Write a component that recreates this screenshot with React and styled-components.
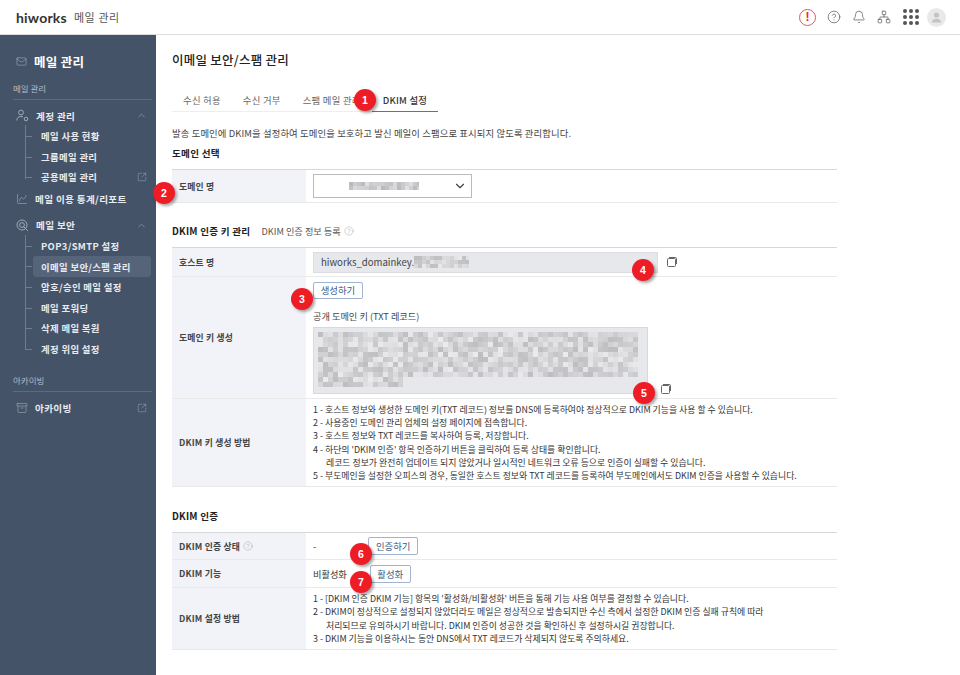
import React from 'react';
import styled, { createGlobalStyle } from 'styled-components';
import { Mail, ChevronUp, SquareArrowOutUpRight, Bell, CircleHelp, Network, ChevronDown, ChartSpline, Archive } from 'lucide-react';

const GlobalStyle = createGlobalStyle`
  * { box-sizing: border-box; }
  html, body { margin: 0; padding: 0; height: 100%; background: #fff; }
  body {
    font-family: "Noto Sans CJK KR", "Noto Sans", sans-serif;
    color: #333;
    overflow: hidden;
  }
`;

const Page = styled.div`
  width: 960px;
  height: 675px;
  display: flex;
  flex-direction: column;
  overflow: hidden;
`;

const Header = styled.header`
  height: 35px;
  flex: none;
  display: flex;
  align-items: center;
  padding: 0 14px 0 16px;
  border-bottom: 1px solid #ddd;
`;

const Logo = styled.span`
  font-family: "Lato", sans-serif;
  font-size: 14px;
  font-weight: 700;
  color: #333;
  letter-spacing: 0.2px;
`;

const HeaderTitle = styled.span`
  margin-left: 7px;
  font-size: 11px;
  color: #555;
  letter-spacing: 0.6px;
`;

const HeaderIcons = styled.div`
  margin-left: auto;
  display: flex;
  align-items: center;
  gap: 11px;
  color: #555;
`;

const AlertIcon = styled.span`
  width: 17px;
  height: 17px;
  border-radius: 50%;
  border: 1.5px solid #e8574f;
  color: #e02d2d;
  font-size: 12px;
  font-weight: 700;
  line-height: 14px;
  text-align: center;
  font-family: "Liberation Sans", sans-serif;
`;

const DotGrid = styled.span`
  display: grid;
  grid-template-columns: repeat(3, 4px);
  gap: 2px;
  margin-left: 1px;
  span { width: 4px; height: 4px; border-radius: 50%; background: #555; }
`;

const Avatar = styled.span`
  width: 19px;
  height: 19px;
  border-radius: 50%;
  background: #e9e9e9;
  margin-left: -3px;
  display: flex;
  align-items: center;
  justify-content: center;
`;

const Body = styled.div`
  flex: 1;
  display: flex;
  min-height: 0;
`;

const Sidebar = styled.aside`
  width: 156px;
  flex: none;
  background: #445368;
  padding: 16px 8px 0 13px;
  color: #e6e9ee;
`;

const SideTitle = styled.div`
  display: flex;
  align-items: center;
  gap: 7px;
  height: 20px;
  padding-left: 3px;
  font-size: 12.5px;
  font-weight: 700;
  color: #fff;
  letter-spacing: 0.3px;
  svg { color: #aab3c0; }
`;

const SideLabel = styled.div`
  margin-top: ${p => p.$top}px;
  height: 18px;
  font-size: 8.5px;
  line-height: 13px;
  color: #b4bcc8;
  border-bottom: 1px solid #5d6b80;
  margin-right: -4px;
`;

const MenuRow = styled.div`
  height: 21px;
  margin-top: ${p => p.$top || 0}px;
  display: flex;
  align-items: center;
  gap: 7px;
  padding-left: 3px;
  font-size: 9.6px;
  font-weight: 700;
  letter-spacing: 0.35px;
  color: #e8ebef;
  svg { color: #aab3c0; flex: none; }
  svg.end { margin-left: auto; margin-right: 1px; }
`;

const Tree = styled.div`
  position: relative;
  margin-left: 12px;
  padding-left: 8px;
  &::before {
    content: "";
    position: absolute;
    left: 0;
    top: -1px;
    bottom: 9px;
    width: 1px;
    background: #6f7c8f;
  }
`;

const SubItem = styled.div`
  position: relative;
  height: 20.6px;
  display: flex;
  align-items: center;
  padding: 0 4px 0 8px;
  margin-right: -3px;
  border-radius: 3px;
  font-size: 9.4px;
  font-weight: 700;
  letter-spacing: 0.35px;
  color: #e8ebef;
  background: ${p => (p.$active ? '#56647a' : 'transparent')};
  &::before {
    content: "";
    position: absolute;
    left: -8px;
    top: 10px;
    width: 7px;
    height: 1px;
    background: #6f7c8f;
  }
  svg { margin-left: auto; color: #aab3c0; }
`;

const Main = styled.main`
  position: relative;
  flex: 1;
  padding: 15px 123px 0 16px;
  min-width: 0;
`;

const PageTitle = styled.h1`
  margin: 0;
  height: 20px;
  font-size: 12.5px;
  line-height: 20px;
  font-weight: 500;
  color: #222;
  letter-spacing: 0.25px;
`;

const Tabs = styled.nav`
  display: inline-flex;
  margin-top: 21px;
  height: 21px;
  border-bottom: 1px solid #eee;
  padding-left: 11px;
`;

const Tab = styled.span`
  height: 21px;
  padding: 0 ${p => (p.$active ? '11px' : '0')};
  margin-right: ${p => (p.$active ? '0' : '22px')};
  margin-left: ${p => (p.$active ? '-11px' : '0')};
  font-size: 9.4px;
  line-height: 18px;
  color: ${p => (p.$active ? '#333' : '#666')};
  font-weight: ${p => (p.$active ? 500 : 400)};
  letter-spacing: 0.25px;
  white-space: nowrap;
  border-bottom: ${p => (p.$active ? '1px solid #3b7fb8' : 'none')};
`;

const Intro = styled.p`
  margin: 13px 0 0;
  height: 16px;
  font-size: 9.4px;
  line-height: 16px;
  color: #444;
  letter-spacing: 0.1px;
  white-space: nowrap;
`;

const SectionHead = styled.div`
  margin-top: ${p => p.$top}px;
  height: 16px;
  display: flex;
  align-items: center;
  gap: 11px;
`;

const SectionTitle = styled.h2`
  margin: 0;
  font-size: 9.6px;
  font-weight: 700;
  color: #222;
  letter-spacing: 0.25px;
`;

const SectionNote = styled.span`
  display: flex;
  align-items: center;
  gap: 3px;
  font-size: 9.2px;
  color: #555;
  svg { color: #999; }
`;

const Table = styled.div`
  margin-top: ${p => p.$top}px;
  border-top: 1px solid #d8d8d8;
`;

const Row = styled.div`
  display: grid;
  grid-template-columns: 134px 1fr;
  height: ${p => p.$h}px;
  border-bottom: 1px solid #e9e9e9;
`;

const LabelCell = styled.div`
  display: flex;
  align-items: center;
  gap: 3px;
  padding-left: 7px;
  background: #f1f3f8;
  font-size: 8.8px;
  font-weight: 700;
  color: #444;
  letter-spacing: 0.2px;
  svg { color: #999; }
`;

const ValueCell = styled.div`
  display: flex;
  flex-direction: ${p => (p.$column ? 'column' : 'row')};
  align-items: ${p => (p.$column ? 'flex-start' : 'center')};
  justify-content: ${p => (p.$column ? 'center' : 'flex-start')};
  gap: ${p => p.$gap || 0}px;
  padding-left: 7px;
  font-size: 9.2px;
  color: #333;
`;

const SelectBox = styled.div`
  width: 159px;
  height: 24px;
  border: 1px solid #bbb;
  background: #fff;
  display: flex;
  align-items: center;
  padding: 0 4px 0 0;
  svg { margin-left: auto; color: #444; }
`;

const ReadonlyInput = styled.div`
  width: 345px;
  height: 21px;
  background: #e7e8ec;
  border: 1px solid #dcdde1;
  display: flex;
  align-items: center;
  gap: 0;
  padding-left: 7px;
  font-size: 9.6px;
  color: #444;
`;

const OutlineButton = styled.button`
  height: ${p => p.$h || 17}px;
  width: ${p => p.$w}px;
  margin-left: ${p => p.$left || 0}px;
  padding: 0;
  background: #fff;
  border: 1px solid #9fb4cf;
  border-radius: 2px;
  font-family: inherit;
  font-size: 9.4px;
  color: #35597f;
`;

const KeyLabel = styled.div`
  margin-top: 10px;
  font-size: 9.2px;
  line-height: 14px;
  color: #444;
`;

const KeyBox = styled.div`
  margin-top: 4px;
  width: 335px;
  height: 67px;
  background: #e7e8ec;
  border: 1px solid #d8d9dd;
  padding: 4px 0 0 4px;
`;

const CopyGlyph = styled.svg`
  margin-left: 2px;
  flex: none;
`;

const KeyRow = styled.div`
  display: flex;
  align-items: flex-end;
  gap: 11px;
`;

const Steps = styled.ol`
  list-style: none;
  margin: 0;
  padding: 0;
  font-size: 8.9px;
  line-height: 13.3px;
  color: #333;
  white-space: nowrap;
`;

const Step = styled.li`
  padding-left: ${p => (p.$indent ? '13px' : '0')};
`;

const Badge = styled.span`
  position: absolute;
  left: ${p => p.$x - 156 - 11}px;
  top: ${p => p.$y - 35 - 11}px;
  width: 22px;
  height: 22px;
  border-radius: 50%;
  background: #ee1c25;
  color: #fff;
  font-family: "Liberation Sans", sans-serif;
  font-size: 10.5px;
  font-weight: 700;
  line-height: 22px;
  text-align: center;
  box-shadow: 2px 2px 3px rgba(0, 0, 0, 0.35);
`;

// pixelated patches standing in for the masked domain and key values
const seeded = (seed) => {
  let s = seed;
  return () => {
    s = (s * 16807) % 2147483647;
    return s / 2147483647;
  };
};

const Mosaic = ({ rows, cell = 5, seed = 7, base = 190 }) => {
  const rand = seeded(seed);
  const w = Math.max(...rows);
  const cells = [];
  rows.forEach((len, y) => {
    for (let x = 0; x < len; x += cell) {
      const v = Math.round(base + rand() * 45);
      cells.push(<rect key={`${x}-${y}`} x={x} y={y * cell} width={cell} height={cell} fill={`rgb(${v},${v},${v + 2})`} />);
    }
  });
  return (
    <svg width={w} height={rows.length * cell} shapeRendering="crispEdges">
      {cells}
    </svg>
  );
};

const Copy = () => (
  <CopyGlyph width="10" height="10" viewBox="0 0 10 10" fill="none" stroke="#666" strokeWidth="1">
    <rect x="0.5" y="1.5" width="8" height="8" rx="1" />
    <path d="M2 0.5h6.5a1 1 0 0 1 1 1V7" />
  </CopyGlyph>
);

const UserGear = () => (
  <svg width="13" height="13" viewBox="0 0 13 13" fill="none" stroke="currentColor" strokeWidth="0.9">
    <circle cx="5" cy="3.5" r="2.4" />
    <path d="M0.8 11.5c0-2.6 1.8-4 4.2-4 .8 0 1.4.1 2 .4" />
    <circle cx="10" cy="10" r="1.8" />
  </svg>
);

const Shield = () => (
  <svg width="13" height="13" viewBox="0 0 13 13" fill="none" stroke="currentColor" strokeWidth="0.9">
    <circle cx="6" cy="6" r="5" />
    <circle cx="6" cy="6" r="2.4" />
    <path d="M7.5 7.5l4.5 4.5" />
  </svg>
);

const AvatarGlyph = () => (
  <svg width="11" height="11" viewBox="0 0 11 11" fill="#c4c4c4">
    <circle cx="5.5" cy="3" r="2.6" />
    <path d="M0.8 10.5c0-2.6 2-3.8 4.7-3.8s4.7 1.2 4.7 3.8z" />
  </svg>
);

const keySteps = [
  '1 - 호스트 정보와 생성한 도메인 키(TXT 레코드) 정보를 DNS에 등록하여야 정상적으로 DKIM 기능을 사용 할 수 있습니다.',
  '2 - 사용중인 도메인 관리 업체의 설정 페이지에 접속합니다.',
  '3 - 호스트 정보와 TXT 레코드를 복사하여 등록, 저장합니다.',
  "4 - 하단의 'DKIM 인증' 항목 인증하기 버튼을 클릭하여 등록 상태를 확인합니다.",
  '>레코드 정보가 완전히 업데이트 되지 않았거나 일시적인 네트워크 오류 등으로 인증이 실패할 수 있습니다.',
  '5 - 부도메인을 설정한 오피스의 경우, 동일한 호스트 정보와 TXT 레코드를 등록하여 부도메인에서도 DKIM 인증을 사용할 수 있습니다.',
];

const setupSteps = [
  "1 - [DKIM 인증 > DKIM 기능] 항목의 '활성화/비활성화' 버튼을 통해 기능 사용 여부를 결정할 수 있습니다.",
  '2 - DKIM이 정상적으로 설정되지 않았더라도 메일은 정상적으로 발송되지만 수신 측에서 설정한 DKIM 인증 실패 규칙에 따라',
  '>처리되므로 유의하시기 바랍니다. DKIM 인증이 성공한 것을 확인하신 후 설정하시길 권장합니다.',
  '3 - DKIM 기능을 이용하시는 동안 DNS에서 TXT 레코드가 삭제되지 않도록 주의하세요.',
];

const StepList = ({ items }) => (
  <Steps>
    {items.map((t) => (
      <Step key={t} $indent={t[0] === '>'}>{t.replace('>', '')}</Step>
    ))}
  </Steps>
);

const badges = [
  [1, 365, 100], [2, 164, 193], [3, 302, 299], [4, 643, 270],
  [5, 644, 393], [6, 361, 554], [7, 361, 582],
];

export default function App() {
  return (
    <Page>
      <GlobalStyle />
      <Header>
        <Logo>hiworks</Logo>
        <HeaderTitle>메일 관리</HeaderTitle>
        <HeaderIcons>
          <AlertIcon>!</AlertIcon>
          <CircleHelp size={14} strokeWidth={1.2} />
          <Bell size={14} strokeWidth={1.2} />
          <Network size={14} strokeWidth={1.2} />
          <DotGrid>
            {Array.from({ length: 9 }, (_, i) => <span key={i} />)}
          </DotGrid>
          <Avatar><AvatarGlyph /></Avatar>
        </HeaderIcons>
      </Header>
      <Body>
        <Sidebar>
          <SideTitle><Mail size={11} strokeWidth={1.2} />메일 관리</SideTitle>
          <SideLabel $top={11}>메일 관리</SideLabel>
          <MenuRow $top={5}><UserGear />계정 관리<ChevronUp className="end" size={11} strokeWidth={1.2} /></MenuRow>
          <Tree>
            <SubItem>메일 사용 현황</SubItem>
            <SubItem>그룹메일 관리</SubItem>
            <SubItem>공용메일 관리<SquareArrowOutUpRight size={10} strokeWidth={1.1} /></SubItem>
          </Tree>
          <MenuRow $top={1}><ChartSpline size={12} strokeWidth={1.1} />메일 이용 통계/리포트</MenuRow>
          <MenuRow $top={5}><Shield />메일 보안<ChevronUp className="end" size={11} strokeWidth={1.2} /></MenuRow>
          <Tree>
            <SubItem>POP3/SMTP 설정</SubItem>
            <SubItem $active>이메일 보안/스팸 관리</SubItem>
            <SubItem>암호/승인 메일 설정</SubItem>
            <SubItem>메일 포워딩</SubItem>
            <SubItem>삭제 메일 복원</SubItem>
            <SubItem>계정 위임 설정</SubItem>
          </Tree>
          <SideLabel $top={15}>아카이빙</SideLabel>
          <MenuRow $top={5}><Archive size={12} strokeWidth={1.1} />아카이빙<SquareArrowOutUpRight className="end" size={10} strokeWidth={1.1} /></MenuRow>
        </Sidebar>
        <Main>
          <PageTitle>이메일 보안/스팸 관리</PageTitle>
          <Tabs>
            <Tab>수신 허용</Tab>
            <Tab>수신 거부</Tab>
            <Tab>스팸 메일 관리</Tab>
            <Tab $active>DKIM 설정</Tab>
          </Tabs>
          <Intro>발송 도메인에 DKIM을 설정하여 도메인을 보호하고 발신 메일이 스팸으로 표시되지 않도록 관리합니다.</Intro>
          <SectionHead $top={4}><SectionTitle>도메인 선택</SectionTitle></SectionHead>
          <Table $top={8}>
            <Row $h={33}>
              <LabelCell>도메인 명</LabelCell>
              <ValueCell>
                <SelectBox>
                  <Mosaic rows={[70, 70]} cell={4} seed={11} base={185} />
                  <ChevronDown size={14} strokeWidth={2} />
                </SelectBox>
              </ValueCell>
            </Row>
          </Table>
          <SectionHead $top={20}>
            <SectionTitle>DKIM 인증 키 관리</SectionTitle>
            <SectionNote>DKIM 인증 정보 등록 <CircleHelp size={10} strokeWidth={1} /></SectionNote>
          </SectionHead>
          <Table $top={8}>
            <Row $h={29}>
              <LabelCell>호스트 명</LabelCell>
              <ValueCell $gap={7}>
                <ReadonlyInput>hiworks_domainkey.<Mosaic rows={[55, 55, 55]} cell={4} seed={23} /></ReadonlyInput>
                <Copy />
              </ValueCell>
            </Row>
            <Row $h={122}>
              <LabelCell>도메인 키 생성</LabelCell>
              <ValueCell $column>
                <OutlineButton $w={50}>생성하기</OutlineButton>
                <KeyLabel>공개 도메인 키 (TXT 레코드)</KeyLabel>
                <KeyRow>
                  <KeyBox>
                    <Mosaic rows={[320, 320, 320, 320, 320, 320, 320, 320, 320, 85, 85]} seed={5} />
                  </KeyBox>
                  <Copy />
                </KeyRow>
              </ValueCell>
            </Row>
            <Row $h={88}>
              <LabelCell>DKIM 키 생성 방법</LabelCell>
              <ValueCell><StepList items={keySteps} /></ValueCell>
            </Row>
          </Table>
          <SectionHead $top={21}><SectionTitle>DKIM 인증</SectionTitle></SectionHead>
          <Table $top={8}>
            <Row $h={27}>
              <LabelCell>DKIM 인증 상태 <CircleHelp size={10} strokeWidth={1} /></LabelCell>
              <ValueCell>-<OutlineButton $w={50} $h={18} $left={52}>인증하기</OutlineButton></ValueCell>
            </Row>
            <Row $h={28}>
              <LabelCell>DKIM 기능</LabelCell>
              <ValueCell>비활성화<OutlineButton $w={41} $h={18} $left={23}>활성화</OutlineButton></ValueCell>
            </Row>
            <Row $h={62}>
              <LabelCell>DKIM 설정 방법</LabelCell>
              <ValueCell><StepList items={setupSteps} /></ValueCell>
            </Row>
          </Table>
          {badges.map(([n, x, y]) => <Badge key={n} $x={x} $y={y}>{n}</Badge>)}
        </Main>
      </Body>
    </Page>
  );
}
